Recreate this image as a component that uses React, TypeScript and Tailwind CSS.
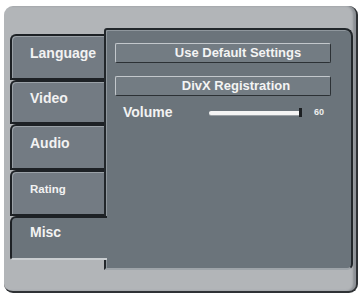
const tabs = [
    { label: "Language", h: "h-[46px]", size: "text-[14px]" },
    { label: "Video", h: "h-[44px]", size: "text-[14px]" },
    { label: "Audio", h: "h-[46px]", size: "text-[14px]" },
    { label: "Rating", h: "h-[46px]", size: "text-[11.5px]" },
];

const MenuButton = ({ label, offset }: { label: string; offset: string }) => (
    <div
        className={`flex h-[20px] w-[216px] items-center justify-center rounded-[2px] border border-t-[#c3c8cc] border-l-[#c3c8cc] border-r-[#2c3135] border-b-[#2c3135] bg-[#737c83] text-[13px] font-bold text-[#f4f4f4] ${offset}`}
    >
        {label}
    </div>
);

export default function App() {
    return (
        <div className="h-[296px] w-[362px] bg-white pl-[4px] pt-[6px] font-['Liberation_Sans',Arial,sans-serif]">
            <div className="flex h-[287px] w-[354px] items-start rounded-[9px] border-r-2 border-b-2 border-[#2f3235] bg-[#b2b5b8] pl-[6px] pt-[22px] shadow-[inset_-3px_0_2px_#8d9196]">
                <div className="mt-[6px] flex w-[94px] flex-col">
                    {tabs.map((t) => (
                        <div
                            key={t.label}
                            className={`flex ${t.h} items-center rounded-tl-[6px] border-2 border-r-0 border-[#1d2125] bg-[#737b83] pb-[7px] pl-[18px] ${t.size} font-bold text-[#f2f2f2] shadow-[inset_1px_1px_0_#9aa1a7]`}
                        >
                            {t.label}
                        </div>
                    ))}
                    <div className="relative z-10 -mr-[3px] flex h-[44px] items-center rounded-bl-[3px] rounded-tl-[6px] border-2 border-r-0 border-b-[#c9cdd0] border-t-[#1d2125] border-l-[#1d2125] bg-[#6b747b] pb-[12px] pl-[18px] text-[14px] font-bold text-[#f2f2f2]">
                        Misc
                    </div>
                </div>
                <div className="flex h-[242px] w-[249px] flex-col rounded-tl-[3px] rounded-tr-[8px] rounded-br-[6px] border-2 border-[#22272b] border-b-[#9ea4a9] bg-[#6b747b] pl-[9px] pt-[13px] shadow-[inset_1px_1px_0_#8f979d]">
                    <MenuButton label="Use Default Settings" offset="pl-[30px]" />
                    <div className="h-[13px]" />
                    <MenuButton label="DivX Registration" offset="pl-[26px]" />
                    <div className="mt-[6px] flex items-center">
                        <span className="w-[94px] pl-[8px] text-[14px] font-bold text-[#f2f2f2]">Volume</span>
                        <div className="flex items-center">
                            <div className="h-[4px] w-[90px] rounded-l-full bg-[#f4f4f4] shadow-[0_1px_0_#9aa0a5]" />
                            <div className="h-[9px] w-[3px] bg-[#1c1f22]" />
                        </div>
                        <span className="ml-[12px] text-[9px] font-bold text-[#eeeeee]">60</span>
                    </div>
                </div>
            </div>
        </div>
    );
}
